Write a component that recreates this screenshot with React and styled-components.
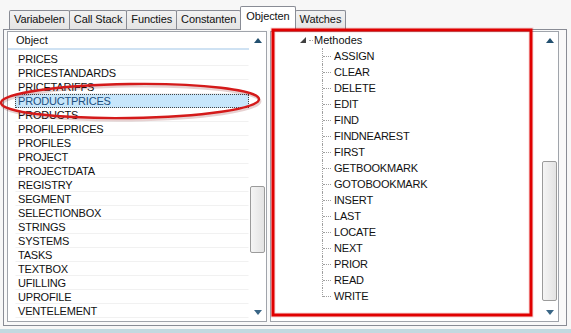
import React from "react";
import styled, { createGlobalStyle } from "styled-components";

const GlobalStyle = createGlobalStyle`
    body {
        margin: 0;
        background: #f6f6f6;
        font-family: "Liberation Sans", Arial, sans-serif;
        font-size: 11px;
        overflow: hidden;
    }
`;

const tabs = ["Variabelen", "Call Stack", "Functies", "Constanten", "Objecten", "Watches"];

const objects = [
    "PRICES", "PRICESTANDARDS", "PRICETARIFFS", "PRODUCTPRICES", "PRODUCTS",
    "PROFILEPRICES", "PROFILES", "PROJECT", "PROJECTDATA", "REGISTRY", "SEGMENT",
    "SELECTIONBOX", "STRINGS", "SYSTEMS", "TASKS", "TEXTBOX", "UFILLING",
    "UPROFILE", "VENTELEMENT",
];

const methods = [
    "ASSIGN", "CLEAR", "DELETE", "EDIT", "FIND", "FINDNEAREST", "FIRST",
    "GETBOOKMARK", "GOTOBOOKMARK", "INSERT", "LAST", "LOCATE", "NEXT",
    "PRIOR", "READ", "WRITE",
];

function ScrollBar({ thumbTop, thumbHeight }) {
    return (
        <Scroll>
            <ArrowBox><Arrow $up /></ArrowBox>
            <Track>
                <Thumb style={{ marginTop: thumbTop, height: thumbHeight }} />
            </Track>
            <ArrowBox><Arrow /></ArrowBox>
        </Scroll>
    );
}

export default function App() {
    return (
        <Window>
            <GlobalStyle />
            <TabStrip>
                {tabs.map((t) => <Tab key={t} $active={t === "Objecten"}>{t}</Tab>)}
            </TabStrip>

            <Panel>
                <Pane $width={260}>
                    <List>
                        <Header>Object</Header>
                        {objects.map((o) => <Row key={o} $selected={o === "PRODUCTPRICES"}>{o}</Row>)}
                    </List>
                    <ScrollBar thumbTop={137} thumbHeight={67} />
                </Pane>

                <Pane $width={289}>
                    <Tree>
                        <Node>
                            <Expander />
                            <Dash />
                            Methodes
                        </Node>
                        <Children>
                            {methods.map((m, i) => (
                                <Leaf key={m}>
                                    <Connector $last={i === methods.length - 1}><Stub /></Connector>
                                    {m}
                                </Leaf>
                            ))}
                        </Children>
                    </Tree>
                    <ScrollBar thumbTop={112} thumbHeight={140} />
                </Pane>
            </Panel>

            <Footer />

            <Marks width="571" height="333" viewBox="0 0 571 333">
                <ellipse cx="131" cy="103" rx="129" ry="17" fill="none" stroke="rgba(120,0,0,0.18)" strokeWidth="3" transform="rotate(-0.8 131 103)" />
                <ellipse cx="130" cy="101" rx="129" ry="17" fill="none" stroke="#d41a1a" strokeWidth="2.4" transform="rotate(-0.8 130 101)" />
                <rect x="273" y="30" width="258" height="285" fill="none" stroke="rgba(200,0,0,0.15)" strokeWidth="5" />
                <rect x="273" y="30" width="258" height="285" fill="none" stroke="#e00000" strokeWidth="3" />
            </Marks>
        </Window>
    );
}

const Window = styled.div`
    position: relative;
    width: 571px;
    height: 333px;
    display: flex;
    flex-direction: column;
    background: #f7f7f7;
`;

const TabStrip = styled.div`
    display: flex;
    align-items: flex-end;
    height: 29px;
    padding-left: 10px;
    position: relative;
    z-index: 1;
`;

const Tab = styled.div`
    box-sizing: border-box;
    height: ${(p) => (p.$active ? "24px" : "19px")};
    margin-bottom: ${(p) => (p.$active ? "-1px" : "0")};
    margin-left: -1px;
    padding: ${(p) => (p.$active ? "3px 5px 0" : "2px 4px 0")};
    border: 1px solid #898c95;
    border-bottom: none;
    border-radius: 2px 2px 0 0;
    background: ${(p) => (p.$active ? "#ffffff" : "linear-gradient(#f2f2f2, #e4e4e4)")};
    color: #111;
    letter-spacing: -0.1px;
    white-space: nowrap;
`;

const Panel = styled.div`
    box-sizing: border-box;
    display: flex;
    gap: 3px;
    height: 297px;
    margin: 0 4px 0 3px;
    padding: 1px 7px 3px 3px;
    border: 1px solid #898c95;
    background: #f9f9f9;
`;

const Pane = styled.div`
    box-sizing: border-box;
    display: flex;
    width: ${(p) => p.$width}px;
    border: 1px solid #a0a4ab;
    background: #ffffff;
`;

const List = styled.div`
    flex: 1;
    display: flex;
    flex-direction: column;
`;

const Header = styled.div`
    box-sizing: border-box;
    height: 18px;
    margin-bottom: 2px;
    padding: 2px 0 0 8px;
    border-bottom: 2px solid #cfe2f3;
    color: #111;
`;

const Row = styled.div`
    box-sizing: border-box;
    height: 14px;
    line-height: 12px;
    margin-left: 7px;
    padding-left: 2px;
    letter-spacing: -0.2px;
    color: ${(p) => (p.$selected ? "#1d4f80" : "#111")};
    background: ${(p) => (p.$selected ? "#c7e6fb" : "transparent")};
    border: 1px ${(p) => (p.$selected ? "dotted #444" : "solid transparent")};
    border-bottom: 1px ${(p) => (p.$selected ? "dotted #444" : "solid #f1f1f1")};
`;

const Scroll = styled.div`
    width: 17px;
    display: flex;
    flex-direction: column;
`;

const ArrowBox = styled.div`
    height: 17px;
    display: flex;
    align-items: center;
    justify-content: center;
`;

const Arrow = styled.div`
    width: 0;
    height: 0;
    border-left: 4px solid transparent;
    border-right: 4px solid transparent;
    ${(p) => (p.$up ? "border-bottom: 5px solid #23506f;" : "border-top: 5px solid #3a6686;")}
`;

const Track = styled.div`
    flex: 1;
    display: flex;
    flex-direction: column;
    align-items: center;
`;

const Thumb = styled.div`
    box-sizing: border-box;
    width: 15px;
    border: 1px solid #9b9b9b;
    border-radius: 2px;
    background: linear-gradient(90deg, #f5f5f5, #e3e3e3);
`;

const Tree = styled.div`
    flex: 1;
    padding-left: 29px;
    display: flex;
    flex-direction: column;
`;

const Node = styled.div`
    display: flex;
    align-items: center;
    height: 16px;
    color: #111;
`;

const Expander = styled.div`
    width: 0;
    height: 0;
    border-left: 6px solid transparent;
    border-bottom: 6px solid #404040;
    margin-right: 3px;
`;

const Dash = styled.div`
    width: 4px;
    border-top: 1px dotted #a0a0a0;
    margin-right: 1px;
`;

const Children = styled.div`
    display: flex;
    flex-direction: column;
    padding-left: 22px;
`;

const Leaf = styled.div`
    display: flex;
    align-items: flex-start;
    height: 16px;
    line-height: 16px;
    color: #111;
    letter-spacing: -0.2px;
`;

const Connector = styled.div`
    box-sizing: border-box;
    width: 12px;
    height: ${(p) => (p.$last ? "9px" : "16px")};
    border-left: 1px dotted #a0a0a0;
`;

const Stub = styled.div`
    width: 8px;
    height: 8px;
    border-bottom: 1px dotted #a0a0a0;
`;

const Footer = styled.div`
    flex: 1;
    background: linear-gradient(#f7f7f7 0 3px, #c2d9e0 3px);
`;

const Marks = styled.svg`
    position: absolute;
    left: 0;
    top: 0;
    pointer-events: none;
    z-index: 2;
`;
